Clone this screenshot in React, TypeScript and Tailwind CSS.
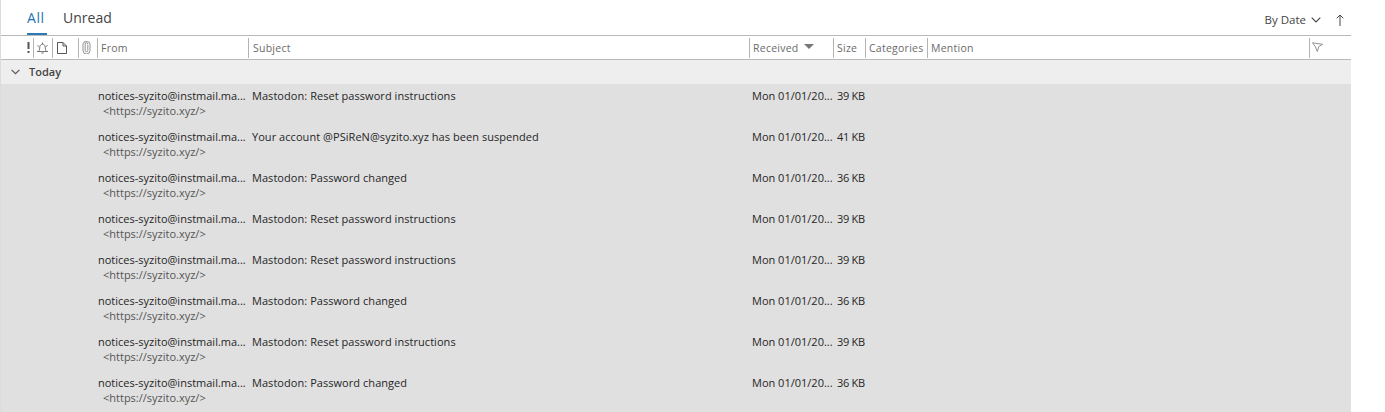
const FONT = "font-['Open_Sans','Noto_Sans',sans-serif]";

type Row = { subject: string; size: string };
const rows: Row[] = [
  { subject: "Mastodon: Reset password instructions", size: "39 KB" },
  { subject: "Your account @PSiReN@syzito.xyz has been suspended", size: "41 KB" },
  { subject: "Mastodon: Password changed", size: "36 KB" },
  { subject: "Mastodon: Reset password instructions", size: "39 KB" },
  { subject: "Mastodon: Reset password instructions", size: "39 KB" },
  { subject: "Mastodon: Password changed", size: "36 KB" },
  { subject: "Mastodon: Reset password instructions", size: "39 KB" },
  { subject: "Mastodon: Password changed", size: "36 KB" },
];

function Head({ w, children }: { w: string; children?: React.ReactNode }) {
  return (
    <div className={`${w} h-[20px] shrink-0 border-l border-[#b4b4b4] flex items-center pl-[3px] whitespace-nowrap overflow-hidden`}>
      {children}
    </div>
  );
}

export default function App() {
  return (
    <div className={`w-[1385px] h-[412px] overflow-hidden bg-white ${FONT} text-[11px] text-[#262626] antialiased`}>
      <div className="w-[1351px] h-[412px] flex flex-col border-l border-[#dcdcdc]">
        <div className="h-[35px] shrink-0 flex items-start justify-between pl-[26px] pr-[7px]">
          <div className="flex text-[14px] leading-[20px] pt-[8px]">
            <div className="h-[27px] w-[20px] border-b-2 border-[#2b79b5] text-[#1f74b5] tracking-[0.6px] mr-[16px]">All</div>
            <div className="text-[#444444]">Unread</div>
          </div>
          <div className="flex items-center pt-[11px] text-[11.5px] leading-[18px] text-[#444444]">
            <span>By Date</span>
            <svg width="10" height="6" viewBox="0 0 10 6" className="ml-[5px] mr-[15px]" fill="none" stroke="#444" strokeWidth="1.1">
              <path d="M.7.7 5 5l4.300-4.300" />
            </svg>
            <svg width="8" height="12" viewBox="0 0 8 12" fill="none" stroke="#444" strokeWidth="1">
              <path d="M4 12V1M.7 4.300 4 1l3.300 3.300" />
            </svg>
          </div>
        </div>

        <div className="h-[25px] shrink-0 border-y border-[#b9b9b9] flex items-center text-[10.5px] tracking-[0.25px] text-[#6b6b6b]">
          <div className="w-[32px] shrink-0 flex justify-end pr-[3px]">
            <svg width="3" height="11" viewBox="0 0 3 11" fill="#555"><rect x="0.5" width="2" height="7" /><rect x="0.5" y="9" width="2" height="2" /></svg>
          </div>
          <Head w="w-[19px]">
            <svg width="13" height="13" viewBox="0 0 13 13" fill="none" stroke="#666" strokeWidth="0.9" className="-ml-[1px]">
              <path d="M1 10.500h11M2.500 10.500c1.300-1.500 1-3 1.300-4.600C4.100 4.200 5 3.200 6.500 3.200s2.400 1 2.700 2.700c.3 1.600 0 3.100 1.300 4.600M5.300 12h2.400M6.500 3.200V1.500M1.500 4.500 3 5.500M11.500 4.500 10 5.500" />
            </svg>
          </Head>
          <Head w="w-[26px]">
            <svg width="10" height="12" viewBox="0 0 10 12" fill="none" stroke="#555" strokeWidth="1" className="ml-[1px]">
              <path d="M.5.5h5.500l3.500 3.500v7.500h-9zM6 .5V4h3.500" />
            </svg>
          </Head>
          <Head w="w-[19px]">
            <svg width="9" height="13" viewBox="0 0 9 13" fill="none" stroke="#777" strokeWidth="0.8" className="ml-[0px]">
              <path d="M5.800 3.500v6a1.300 1.300 0 0 1-2.600 0V3a1.300 1.300 0 0 1 2.600 0M8 3v6.500a3.500 3.500 0 0 1-7 0V3a3.500 2.500 0 0 1 7 0" />
            </svg>
          </Head>
          <Head w="w-[151px]"><span className="translate-y-[1px]">From</span></Head>
          <Head w="w-[501px]"><span className="translate-y-[1px] ml-[1px]">Subject</span></Head>
          <Head w="w-[84px]">
            <span className="translate-y-[1px]">Received</span>
            <svg width="10" height="5" viewBox="0 0 10 5" fill="#777" className="ml-[5px] -mt-[3px]"><path d="M0 0h10L5 5z" /></svg>
          </Head>
          <Head w="w-[32px]"><span className="translate-y-[1px]">Size</span></Head>
          <Head w="w-[62px]"><span className="translate-y-[1px]">Categories</span></Head>
          <Head w="w-[382px]"><span className="translate-y-[1px]">Mention</span></Head>
          <Head w="w-[41px]">
            <svg width="11" height="10" viewBox="0 0 11 10" fill="none" stroke="#777" strokeWidth="0.8" className="-ml-[1px] -mt-[1px]">
              <path d="M.5.800 10.500 2.300 6.800 4.600 5.300 9.500 3.300 4.600z" />
            </svg>
          </Head>
        </div>

        <div className="h-[24px] shrink-0 bg-[#eeeeee] flex items-center font-semibold text-[#444444]">
          <svg width="9" height="6" viewBox="0 0 9 6" fill="none" stroke="#555" strokeWidth="1.200" className="ml-[10px] mr-[9px]">
            <path d="M.6.800 4.500 4.700 8.400.800" />
          </svg>
          <span>Today</span>
        </div>

        <div className="flex-1 bg-[#e0e0e0] flex flex-col">
          {rows.map((r, i) => (
            <div key={i} className="h-[41px] shrink-0 flex pl-[97px] pt-[4px]">
              <div className="w-[154px] shrink-0">
                <div className="leading-[15px] whitespace-nowrap">notices-syzito@instmail.ma...</div>
                <div className="leading-[15px] pl-[5px] text-[#555555] whitespace-nowrap">&lt;https://syzito.xyz/&gt;</div>
              </div>
              <div className="w-[500px] shrink-0 leading-[15px] tracking-[0.05px] whitespace-nowrap">{r.subject}</div>
              <div className="w-[85px] shrink-0 leading-[15px] whitespace-nowrap">Mon 01/01/20...</div>
              <div className="leading-[15px] tracking-[-0.3px] whitespace-nowrap">{r.size}</div>
            </div>
          ))}
        </div>
      </div>
    </div>
  );
}
